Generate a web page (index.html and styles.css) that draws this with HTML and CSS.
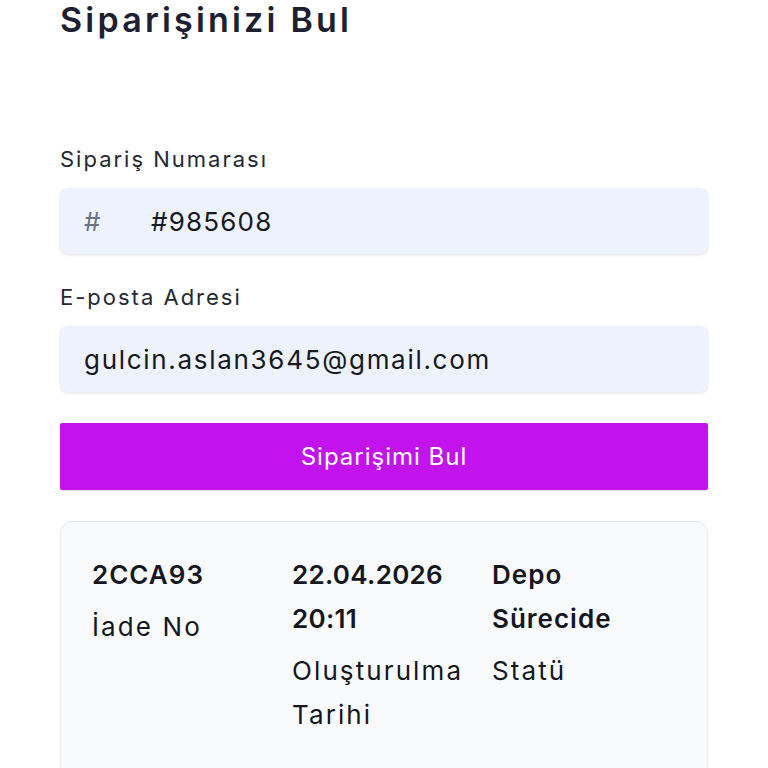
FILE: index.html
```html
<!DOCTYPE html>
<html lang="tr">
<head>
<meta charset="utf-8">
<link rel="stylesheet" href="styles.css">
</head>
<body>
<main class="page">
  <h1 class="title">Siparişinizi Bul</h1>
  <form class="form">
    <div class="field">
      <label class="label">Sipariş Numarası</label>
      <div class="input">
        <span class="input-icon">#</span>
        <span class="input-value num">#985608</span>
      </div>
    </div>
    <div class="field">
      <label class="label">E-posta Adresi</label>
      <div class="input">
        <span class="input-value">gulcin.aslan3645@gmail.com</span>
      </div>
    </div>
    <button type="button" class="btn">Siparişimi Bul</button>
  </form>
  <section class="card">
    <div class="col">
      <div class="value">2CCA93</div>
      <div class="key">İade No</div>
    </div>
    <div class="col">
      <div class="value num">22.04.2026 20:11</div>
      <div class="key">Oluşturulma Tarihi</div>
    </div>
    <div class="col">
      <div class="value">Depo Sürecide</div>
      <div class="key">Statü</div>
    </div>
  </section>
</main>
</body>
</html>
```
FILE: styles.css
```css
* { box-sizing: border-box; }
html, body { margin: 0; padding: 0; background: #ffffff; }
body {
  font-family: "Inter", "Noto Sans", sans-serif;
  color: #1b1f2b;
}
.page {
  width: 648px;
  margin-left: 60px;
}
.title {
  margin: 0;
  font-size: 34px;
  line-height: 40px;
  font-weight: 600;
  color: #1c2030;
  letter-spacing: 3.2px;
}
.form {
  margin-top: 105px;
  display: flex;
  flex-direction: column;
}
.field { display: flex; flex-direction: column; margin-bottom: 29px; }
.label {
  font-size: 22px;
  line-height: 28px;
  color: #242833;
  margin-bottom: 15px;
  letter-spacing: 2px;
}
.input {
  height: 66px;
  background: #eef2fc;
  border-radius: 8px;
  box-shadow: 0 1px 3px rgba(0,0,0,0.12);
  display: flex;
  align-items: center;
  padding: 0 24px;
}
.input-icon {
  font-size: 26px;
  color: #6b7280;
  width: 67px;
}
.input-value {
  font-size: 26px;
  color: #15181f;
  letter-spacing: 1.7px;
}
.input-value.num { letter-spacing: 1.2px; }
.btn {
  margin-top: 2px;
  height: 67px;
  border: none;
  background: #c213ed;
  color: #ffffff;
  font-family: inherit;
  font-size: 24px;
  letter-spacing: 1px;
  border-radius: 2px;
  box-shadow: 0 1px 3px rgba(0,0,0,0.15);
}
.card {
  margin-top: 31px;
  border: 1px solid #e5e7eb;
  border-radius: 12px;
  background: #f9fafb;
  padding: 31px 31px 32px;
  display: grid;
  grid-template-columns: 200px 200px 1fr;
  min-height: 260px;
}
.value {
  font-size: 26px;
  line-height: 44px;
  font-weight: 600;
  color: #14171f;
  letter-spacing: 1px;
}
.value.num { letter-spacing: 0.3px; }
.key {
  margin-top: 8px;
  font-size: 26px;
  line-height: 44px;
  color: #14171f;
  letter-spacing: 2.1px;
}
```
